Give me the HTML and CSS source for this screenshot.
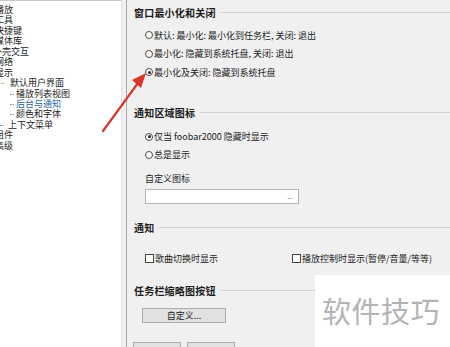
FILE: index.html
```html
<!DOCTYPE html>
<html lang="zh">

<head>
    <meta charset="UTF-8">
    <title>后台与通知</title>
    <link rel="stylesheet" href="styles.css">
</head>

<body>
    <div class="app">
        <ul class="tree">
            <li class="top">播放</li>
            <li class="top">工具</li>
            <li class="top">快捷键</li>
            <li class="top">媒体库</li>
            <li class="top shell">外壳交互</li>
            <li class="top">网络</li>
            <li class="top">显示</li>
            <li class="branch"><span class="minus">-</span>默认用户界面</li>
            <li class="leaf">播放列表视图</li>
            <li class="leaf selected">后台与通知</li>
            <li class="leaf">颜色和字体</li>
            <li class="branch2">上下文菜单</li>
            <li class="top">组件</li>
            <li class="top">高级</li>
        </ul>

        <div class="pane">
            <div class="title t1"><span>窗口最小化和关闭</span><i></i></div>
            <div class="opts o1">
                <div class="opt"><b class="radio"></b>默认: 最小化: 最小化到任务栏, 关闭: 退出</div>
                <div class="opt"><b class="radio"></b>最小化: 隐藏到系统托盘, 关闭: 退出</div>
                <div class="opt"><b class="radio on"></b>最小化及关闭: 隐藏到系统托盘</div>
            </div>

            <div class="title t2"><span>通知区域图标</span><i></i></div>
            <div class="opts o2">
                <div class="opt"><b class="radio on"></b>仅当 foobar2000 隐藏时显示</div>
                <div class="opt"><b class="radio"></b>总是显示</div>
            </div>
            <div class="label">自定义图标</div>
            <div class="field"><span>...</span></div>

            <div class="title t3"><span>通知</span><i></i></div>
            <div class="checks">
                <div class="opt"><b class="check"></b>歌曲切换时显示</div>
                <div class="opt second"><b class="check"></b>播放控制时显示(暂停/音量/等等)</div>
            </div>

            <div class="title t4"><span>任务栏缩略图按钮</span><i></i></div>
            <div class="btn custom">自定义...</div>
            <div class="btnrow">
                <div class="btn small"></div>
                <div class="btn small"></div>
            </div>
        </div>
    </div>

    <svg class="arrow" width="450" height="347" viewBox="0 0 450 347">
        <line x1="103" y1="131" x2="138" y2="83" stroke="#d9372b" stroke-width="2.2" stroke-linecap="round" />
        <polygon points="146,73 132,80 141,88" fill="#d9372b" />
    </svg>

    <div class="mark">软件技巧</div>
</body>

</html>
```

FILE: styles.css
```css
body {
    margin: 0;
    width: 450px;
    height: 347px;
    overflow: hidden;
    position: relative;
    background-color: #f0f0f0;
    font-family: "Noto Sans CJK SC", "Liberation Sans", sans-serif;
    font-size: 9px;
    color: #1b1b1b;
}

.app {
    display: flex;
    height: 347px;
}

.tree {
    list-style: none;
    margin: 0;
    padding: 4px 0 0 0;
    width: 122px;
    flex-shrink: 0;
    background-color: #fff;
    border-top: 1px solid #c8c8c8;
    border-right: 1px solid #e2e2e2;
    overflow: hidden;
    box-sizing: border-box;
}

.tree li {
    height: 10.45px;
    line-height: 10.45px;
    white-space: nowrap;
    position: relative;
}

.tree .top {
    margin-left: -5px;
}

.tree .shell {
    margin-left: -7px;
}

.tree .branch {
    padding-left: 1px;
}

.tree .minus {
    display: inline-block;
    width: 9px;
    color: #777;
}

.tree .leaf {
    padding-left: 16px;
}

.tree .leaf::before {
    content: "";
    position: absolute;
    left: 10px;
    top: 5px;
    width: 4px;
    border-top: 1px dotted #8a8a8a;
}

.tree .branch2 {
    padding-left: 8px;
}

.tree .branch2::before {
    content: "";
    position: absolute;
    left: 0;
    top: 5px;
    width: 4px;
    border-top: 1px dotted #8a8a8a;
}

.tree .selected {
    color: #2a66aa;
}

.pane {
    margin-left: 4px;
    border-left: 1px solid #a9a9a9;
    padding: 5px 0 0 7px;
    flex: 1;
}

.title {
    display: flex;
    align-items: center;
    height: 14px;
    font-size: 10px;
    font-weight: bold;
    letter-spacing: 0.2px;
}

.title i {
    flex: 1;
    height: 1px;
    margin-left: 5px;
    background-color: #d2d2d2;
}

.opts {
    margin-left: 11px;
}

.o1 {
    margin-top: 7px;
}

.o2 {
    margin-top: 8px;
}

.opt {
    display: flex;
    align-items: center;
    height: 18.5px;
    white-space: nowrap;
}

.o2 .opt {
    height: 18px;
}

.radio {
    display: inline-block;
    width: 6px;
    height: 6px;
    border: 1px solid #4a4a4a;
    border-radius: 50%;
    background-color: #fff;
    margin-right: 1px;
    position: relative;
}

.radio.on::after {
    content: "";
    position: absolute;
    left: 1.5px;
    top: 1.5px;
    width: 3px;
    height: 3px;
    border-radius: 50%;
    background-color: #222;
}

.t2 {
    margin-top: 24px;
}

.label {
    margin: 8px 0 0 11px;
    height: 14px;
    line-height: 14px;
}

.field {
    margin: 3px 0 0 11px;
    width: 154px;
    height: 15px;
    box-sizing: border-box;
    background-color: #fff;
    border: 1px solid #b4b4b4;
    display: flex;
    justify-content: flex-end;
    align-items: center;
    padding-right: 5px;
    color: #666;
    font-size: 7px;
}

.t3 {
    margin-top: 17px;
}

.checks {
    display: flex;
    margin: 15px 0 0 11px;
    height: 18px;
}

.checks .opt {
    height: 18px;
}

.checks .second {
    margin-left: 74px;
}

.check {
    display: inline-block;
    width: 7px;
    height: 7px;
    border: 1px solid #444;
    background-color: #fff;
    margin-right: 1px;
}

.t4 {
    margin-top: 16px;
}

.btn {
    box-sizing: border-box;
    height: 15px;
    line-height: 13px;
    text-align: center;
    background-color: #e1e1e1;
    border: 1px solid #adadad;
}

.custom {
    margin: 10px 0 0 8px;
    width: 84px;
}

.btnrow {
    display: flex;
    gap: 6px;
    margin: 19px 0 0 -1px;
}

.small {
    width: 48px;
}

.arrow {
    position: absolute;
    left: 0;
    top: 0;
    pointer-events: none;
}

.mark {
    position: absolute;
    left: 315px;
    top: 275px;
    width: 135px;
    height: 72px;
    background-color: #fff;
    color: #b3b3b3;
    font-size: 29px;
    line-height: 70px;
    padding-left: 7px;
    box-sizing: border-box;
    white-space: nowrap;
    letter-spacing: 0.5px;
}
```
